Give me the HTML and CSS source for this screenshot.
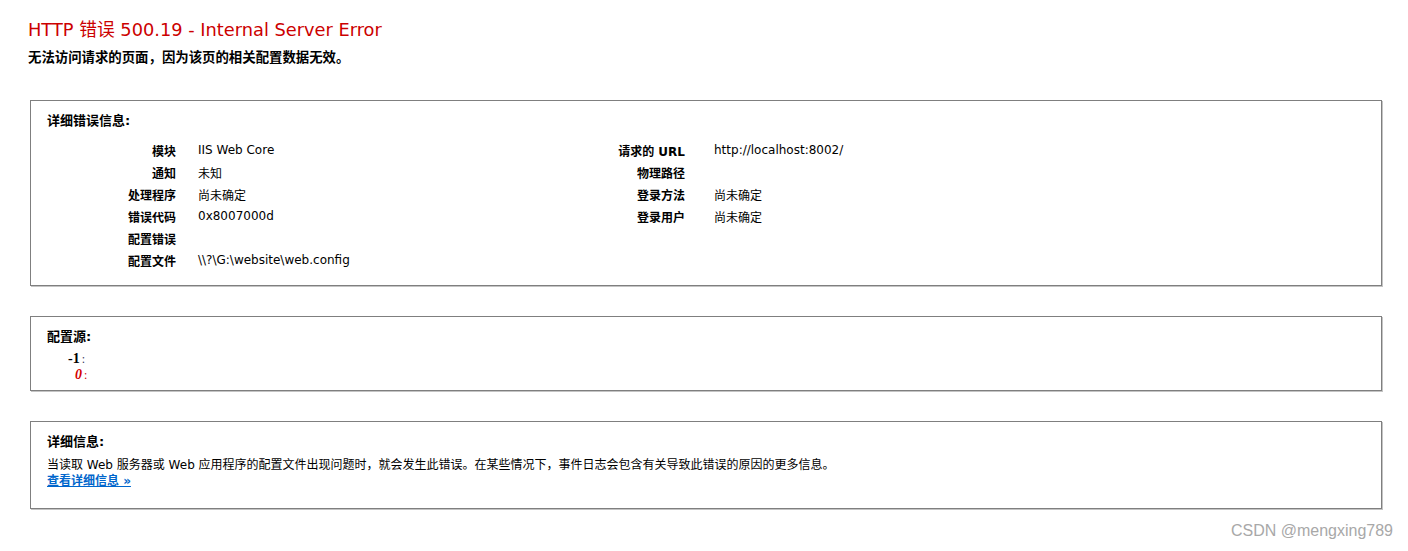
FILE: index.html
```
<!DOCTYPE html>
<html lang="zh-CN">

<head>
    <meta charset="UTF-8">
    <title>IIS 8.5 详细错误 - 500.19 - Internal Server Error</title>
    <link rel="stylesheet" href="styles.css">
</head>

<body>
    <div class="header">
        <h2 class="error-title">HTTP 错误 500.19 - Internal Server Error</h2>
        <h3 class="error-sub">无法访问请求的页面，因为该页的相关配置数据无效。</h3>
    </div>

    <!-- 详细错误信息 -->
    <fieldset class="box box-details">
        <h4>详细错误信息:</h4>
        <div class="details">
            <table class="detail-table left">
                <tr><th>模块</th><td>IIS Web Core</td></tr>
                <tr><th>通知</th><td>未知</td></tr>
                <tr><th>处理程序</th><td>尚未确定</td></tr>
                <tr><th>错误代码</th><td>0x8007000d</td></tr>
                <tr><th>配置错误</th><td></td></tr>
                <tr><th>配置文件</th><td>\\?\G:\website\web.config</td></tr>
            </table>
            <table class="detail-table right">
                <tr><th>请求的 URL</th><td>http://localhost:8002/</td></tr>
                <tr><th>物理路径</th><td></td></tr>
                <tr><th>登录方法</th><td>尚未确定</td></tr>
                <tr><th>登录用户</th><td>尚未确定</td></tr>
            </table>
        </div>
    </fieldset>

    <!-- 配置源 -->
    <fieldset class="box box-source">
        <h4>配置源:</h4>
        <div class="config-source">
            <div class="line line-prev"><b>-1</b><span class="colon">:</span></div>
            <div class="line line-err"><i>0</i><span class="colon">:</span></div>
        </div>
    </fieldset>

    <!-- 详细信息 -->
    <fieldset class="box box-more">
        <h4>详细信息:</h4>
        <p>当读取 Web 服务器或 Web 应用程序的配置文件出现问题时，就会发生此错误。在某些情况下，事件日志会包含有关导致此错误的原因的更多信息。</p>
        <p><a href="#">查看详细信息 »</a></p>
    </fieldset>

    <div class="watermark">CSDN @mengxing789</div>
</body>

</html>
```

FILE: styles.css
```
body {
    margin: 0;
    background: #fff;
    color: #000;
    font-family: "DejaVu Sans", Verdana, "Noto Sans CJK SC", sans-serif;
    font-size: 12px;
    position: relative;
    height: 551px;
    overflow: hidden;
}

.header {
    padding: 20px 0 0 28px;
}

.error-title {
    margin: 0;
    font-size: 17.8px;
    line-height: 20px;
    font-weight: normal;
    color: #CC0000;
}

.error-sub {
    margin: 9px 0 0 0;
    font-size: 13.4px;
    line-height: 18px;
    font-weight: bold;
}

.box {
    margin: 0 26px 0 30px;
    padding: 0 15px 0 16px;
    border: 1px solid #7f7f7f;
    box-shadow: 1px 1px 0 #c4c4c4;
    min-width: 0;
}

.box h4 {
    margin: 0;
    font-size: 13px;
    line-height: 16px;
    font-weight: bold;
}

.box-details {
    margin-top: 33px;
    padding-top: 12px;
    padding-bottom: 14px;
}

.details {
    display: flex;
    align-items: flex-start;
    margin-top: 10px;
}

.detail-table {
    border-collapse: collapse;
    border-spacing: 0;
}

.detail-table tr {
    height: 22px;
}

.detail-table th {
    padding: 0;
    text-align: right;
    font-weight: bold;
    vertical-align: middle;
    white-space: nowrap;
}

.detail-table td {
    vertical-align: middle;
    white-space: nowrap;
}

.detail-table.left {
    width: 520px;
}

.detail-table.left th {
    width: 129px;
}

.detail-table.left td {
    padding: 0 0 0 22px;
}

.detail-table.right th {
    width: 118px;
}

.detail-table.right td {
    padding: 0 0 0 29px;
}

.box-source {
    margin-top: 30px;
    padding-top: 12px;
    padding-bottom: 7px;
}

.config-source {
    margin-top: 6px;
    font-family: "Liberation Serif", "Times New Roman", serif;
    font-size: 14px;
    line-height: 15px;
}

.line-prev {
    padding-left: 21px;
}

.line-prev .colon {
    margin-left: 2px;
    font-size: 12px;
    color: #33365c;
}

.line-err {
    padding-left: 28px;
    color: #d40000;
}

.line-err i {
    font-weight: bold;
}

.line-err .colon {
    margin-left: 2px;
    font-size: 12px;
}

.box-more {
    margin-top: 30px;
    padding-top: 12px;
    padding-bottom: 19px;
}

.box-more p {
    margin: 0;
    line-height: 16px;
}

.box-more h4 + p {
    margin-top: 7px;
}

.box-more a {
    color: #0066cc;
    font-weight: bold;
    text-decoration: underline;
}

.watermark {
    position: absolute;
    right: 15px;
    bottom: 11px;
    font-family: "Liberation Sans", Arial, sans-serif;
    font-size: 16px;
    color: #a8a8a8;
}
```
